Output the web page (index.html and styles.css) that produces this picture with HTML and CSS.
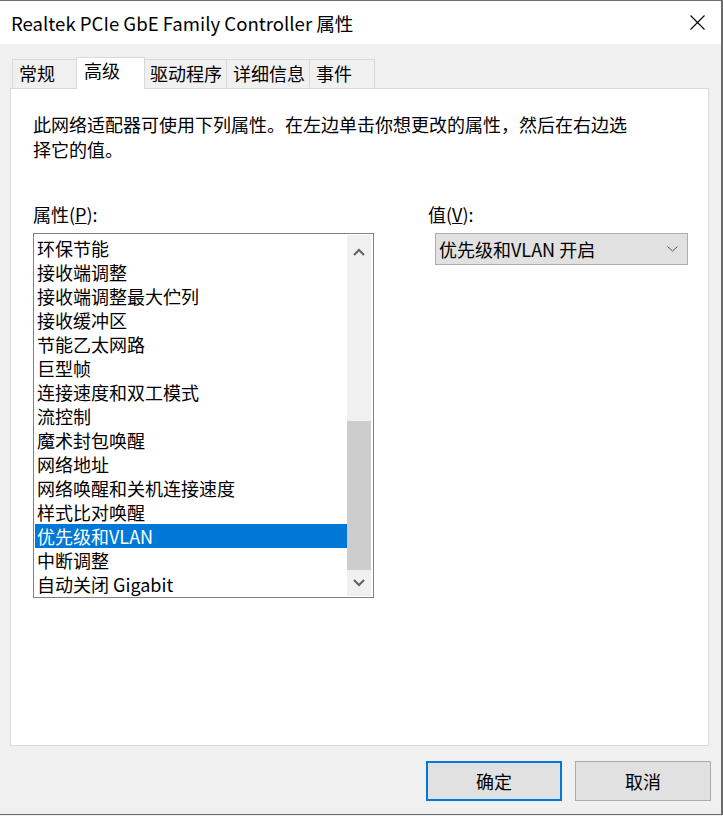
FILE: index.html
```html
<!DOCTYPE html>
<html lang="zh-CN">
<head>
<meta charset="utf-8">
<title>Realtek PCIe GbE Family Controller 属性</title>
<link rel="stylesheet" href="styles.css">
</head>
<body>
<div class="window">
  <div class="titlebar">
    <span class="title">Realtek PCIe GbE Family Controller 属性</span>
    <svg class="close" width="15" height="15" viewBox="0 0 15 15"><path d="M0.5 0.5 L14.5 14.5 M14.5 0.5 L0.5 14.5" stroke="#000" stroke-width="1.1" fill="none"/></svg>
  </div>
  <div class="content">
    <div class="tabs">
      <div class="tab first">常规</div>
      <div class="tab active">高级</div>
      <div class="tab">驱动程序</div>
      <div class="tab">详细信息</div>
      <div class="tab">事件</div>
    </div>
    <div class="panel">
      <p class="desc">此网络适配器可使用下列属性。在左边单击你想更改的属性，然后在右边选择它的值。</p>
      <div class="fields">
        <div class="col-left">
          <div class="label">属性(<u>P</u>):</div>
          <div class="listbox">
            <ul class="items">
              <li>环保节能</li>
              <li>接收端调整</li>
              <li>接收端调整最大伫列</li>
              <li>接收缓冲区</li>
              <li>节能乙太网路</li>
              <li>巨型帧</li>
              <li>连接速度和双工模式</li>
              <li>流控制</li>
              <li>魔术封包唤醒</li>
              <li>网络地址</li>
              <li>网络唤醒和关机连接速度</li>
              <li>样式比对唤醒</li>
              <li class="selected">优先级和VLAN</li>
              <li>中断调整</li>
              <li>自动关闭 Gigabit</li>
            </ul>
            <div class="scrollbar">
              <div class="arrow up"><svg width="12" height="8" viewBox="0 0 12 8"><path d="M1 7 L6 2 L11 7" stroke="#606060" stroke-width="2" fill="none"/></svg></div>
              <div class="track"><div class="thumb" style="height:149px"></div></div>
              <div class="arrow down"><svg width="12" height="8" viewBox="0 0 12 8"><path d="M1 1 L6 6 L11 1" stroke="#606060" stroke-width="2" fill="none"/></svg></div>
            </div>
          </div>
        </div>
        <div class="col-right">
          <div class="label">值(<u>V</u>):</div>
          <div class="select">
            <span>优先级和VLAN 开启</span>
            <svg class="chev" width="11" height="6" viewBox="0 0 11 6"><path d="M0.5 0.5 L5.5 5 L10.5 0.5" stroke="#555" stroke-width="1" fill="none"/></svg>
          </div>
        </div>
      </div>
    </div>
    <div class="buttons">
      <button class="btn default">确定</button>
      <button class="btn">取消</button>
    </div>
  </div>
</div>
</body>
</html>
```

FILE: styles.css
```css
* { box-sizing: border-box; }

body {
  margin: 0;
  background: #f0f0f0;
  font-family: "Noto Sans CJK SC", "Noto Sans", sans-serif;
  font-size: 18px;
  color: #000;
}

.window {
  width: 723px;
  height: 815px;
  border-top: 1px solid #707070;
  border-right: 2px solid #6b6b6b;
  border-bottom: 1px solid #6b6b6b;
  background: #f0f0f0;
  display: flex;
  flex-direction: column;
}

.titlebar {
  height: 43px;
  flex: none;
  background: #fff;
  display: flex;
  align-items: center;
  padding-left: 11px;
  padding-right: 16px;
}

.title {
  flex: 1;
  font-size: 18.6px;
  line-height: 24px;
}

.close { display: block; }

.content {
  flex: 1;
  display: flex;
  flex-direction: column;
  padding: 13px 12px 0 10px;
}

.tabs {
  display: flex;
  align-items: flex-end;
  height: 31px;
  padding-left: 2px;
  position: relative;
  z-index: 2;
}

.tab {
  height: 29px;
  min-width: 66px;
  padding: 0 4px 0 6px;
  border: 1px solid #d9d9d9;
  border-bottom: none;
  background: #f0f0f0;
  line-height: 27px;
  margin-right: -1px;
  white-space: nowrap;
}

.tab.active {
  position: relative;
  z-index: 1;
  height: 32px;
  min-width: 69px;
  margin-left: -1px;
  margin-right: -2px;
  margin-bottom: -1px;
  padding-left: 7px;
  background: #fff;
  line-height: 24px;
}

.panel {
  flex: 1;
  background: #fff;
  border: 1px solid #d9d9d9;
  padding: 23px 0 0 22px;
}

.desc {
  margin: 0;
  width: 604px;
  line-height: 25px;
}

.fields {
  display: flex;
  margin-top: 40px;
}

.label {
  line-height: 24px;
  height: 24px;
}

.col-left { width: 341px; }

.col-right {
  margin-left: 54px;
}

.listbox {
  margin-top: 7px;
  height: 365px;
  border: 1px solid #828282;
  background: #fff;
  padding: 1px 2px 1px 1px;
  display: flex;
}

.items {
  list-style: none;
  margin: 0;
  padding: 1px 0 0 0;
  flex: 1;
}

.items li {
  height: 24px;
  line-height: 24px;
  padding-left: 2px;
  white-space: nowrap;
}

.items li.selected {
  background: #0078d7;
  color: #fff;
}

.scrollbar {
  width: 24px;
  background: #f0f0f0;
  display: flex;
  flex-direction: column;
}

.arrow {
  display: flex;
  align-items: center;
  justify-content: center;
}

.arrow.up { height: 34px; }
.arrow.down { height: 26px; }

.track {
  flex: 1;
  display: flex;
  flex-direction: column;
}

.thumb {
  margin-top: auto;
  background: #cdcdcd;
}

.select {
  margin-top: 7px;
  margin-left: 7px;
  width: 253px;
  height: 32px;
  background: #e1e1e1;
  border: 1px solid #adadad;
  display: flex;
  align-items: center;
  justify-content: space-between;
  padding: 0 9px 0 3px;
  line-height: 30px;
}

.chev { display: block; }

.buttons {
  display: flex;
  justify-content: flex-end;
  gap: 13px;
  padding: 15px 0 13px;
  margin-right: -2px;
}

.btn {
  width: 136px;
  height: 40px;
  background: #e1e1e1;
  border: 1px solid #adadad;
  font-family: inherit;
  font-size: 18px;
  color: #000;
  padding: 0;
}

.btn.default {
  border: 2px solid #0078d7;
}
```
